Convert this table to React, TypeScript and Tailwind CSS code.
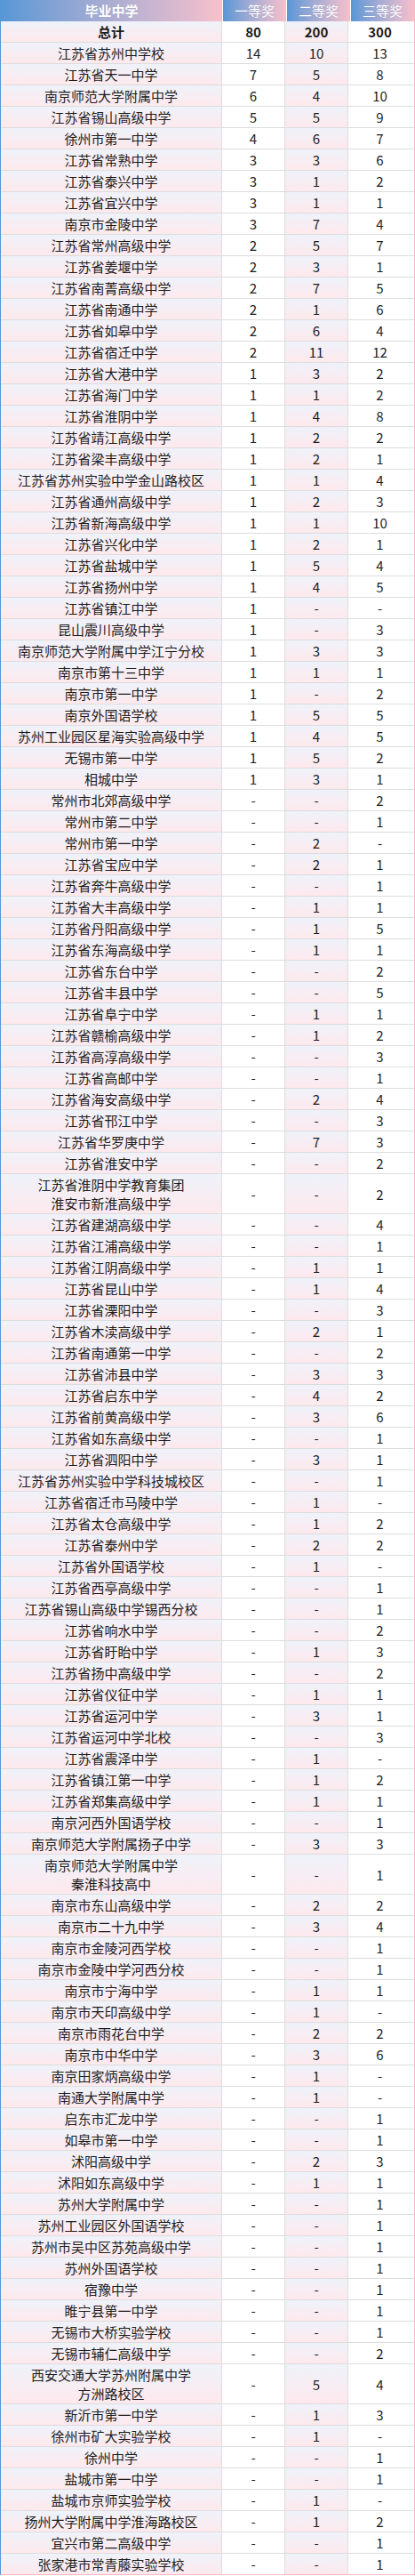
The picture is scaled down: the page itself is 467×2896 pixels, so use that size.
type Row = [string, string, string, string];

// 名称中的 "\n" 表示单元格内换行
const rows: Row[] = [
  ['江苏省苏州中学校', '14', '10', '13'],
  ['江苏省天一中学', '7', '5', '8'],
  ['南京师范大学附属中学', '6', '4', '10'],
  ['江苏省锡山高级中学', '5', '5', '9'],
  ['徐州市第一中学', '4', '6', '7'],
  ['江苏省常熟中学', '3', '3', '6'],
  ['江苏省泰兴中学', '3', '1', '2'],
  ['江苏省宜兴中学', '3', '1', '1'],
  ['南京市金陵中学', '3', '7', '4'],
  ['江苏省常州高级中学', '2', '5', '7'],
  ['江苏省姜堰中学', '2', '3', '1'],
  ['江苏省南菁高级中学', '2', '7', '5'],
  ['江苏省南通中学', '2', '1', '6'],
  ['江苏省如皋中学', '2', '6', '4'],
  ['江苏省宿迁中学', '2', '11', '12'],
  ['江苏省大港中学', '1', '3', '2'],
  ['江苏省海门中学', '1', '1', '2'],
  ['江苏省淮阴中学', '1', '4', '8'],
  ['江苏省靖江高级中学', '1', '2', '2'],
  ['江苏省梁丰高级中学', '1', '2', '1'],
  ['江苏省苏州实验中学金山路校区', '1', '1', '4'],
  ['江苏省通州高级中学', '1', '2', '3'],
  ['江苏省新海高级中学', '1', '1', '10'],
  ['江苏省兴化中学', '1', '2', '1'],
  ['江苏省盐城中学', '1', '5', '4'],
  ['江苏省扬州中学', '1', '4', '5'],
  ['江苏省镇江中学', '1', '-', '-'],
  ['昆山震川高级中学', '1', '-', '3'],
  ['南京师范大学附属中学江宁分校', '1', '3', '3'],
  ['南京市第十三中学', '1', '1', '1'],
  ['南京市第一中学', '1', '-', '2'],
  ['南京外国语学校', '1', '5', '5'],
  ['苏州工业园区星海实验高级中学', '1', '4', '5'],
  ['无锡市第一中学', '1', '5', '2'],
  ['相城中学', '1', '3', '1'],
  ['常州市北郊高级中学', '-', '-', '2'],
  ['常州市第二中学', '-', '-', '1'],
  ['常州市第一中学', '-', '2', '-'],
  ['江苏省宝应中学', '-', '2', '1'],
  ['江苏省奔牛高级中学', '-', '-', '1'],
  ['江苏省大丰高级中学', '-', '1', '1'],
  ['江苏省丹阳高级中学', '-', '1', '5'],
  ['江苏省东海高级中学', '-', '1', '1'],
  ['江苏省东台中学', '-', '-', '2'],
  ['江苏省丰县中学', '-', '-', '5'],
  ['江苏省阜宁中学', '-', '1', '1'],
  ['江苏省赣榆高级中学', '-', '1', '2'],
  ['江苏省高淳高级中学', '-', '-', '3'],
  ['江苏省高邮中学', '-', '-', '1'],
  ['江苏省海安高级中学', '-', '2', '4'],
  ['江苏省邗江中学', '-', '-', '3'],
  ['江苏省华罗庚中学', '-', '7', '3'],
  ['江苏省淮安中学', '-', '-', '2'],
  ['江苏省淮阴中学教育集团\n淮安市新淮高级中学', '-', '-', '2'],
  ['江苏省建湖高级中学', '-', '-', '4'],
  ['江苏省江浦高级中学', '-', '-', '1'],
  ['江苏省江阴高级中学', '-', '1', '1'],
  ['江苏省昆山中学', '-', '1', '4'],
  ['江苏省溧阳中学', '-', '-', '3'],
  ['江苏省木渎高级中学', '-', '2', '1'],
  ['江苏省南通第一中学', '-', '-', '2'],
  ['江苏省沛县中学', '-', '3', '3'],
  ['江苏省启东中学', '-', '4', '2'],
  ['江苏省前黄高级中学', '-', '3', '6'],
  ['江苏省如东高级中学', '-', '-', '1'],
  ['江苏省泗阳中学', '-', '3', '1'],
  ['江苏省苏州实验中学科技城校区', '-', '-', '1'],
  ['江苏省宿迁市马陵中学', '-', '1', '-'],
  ['江苏省太仓高级中学', '-', '1', '2'],
  ['江苏省泰州中学', '-', '2', '2'],
  ['江苏省外国语学校', '-', '1', '-'],
  ['江苏省西亭高级中学', '-', '-', '1'],
  ['江苏省锡山高级中学锡西分校', '-', '-', '1'],
  ['江苏省响水中学', '-', '-', '2'],
  ['江苏省盱眙中学', '-', '1', '3'],
  ['江苏省扬中高级中学', '-', '-', '2'],
  ['江苏省仪征中学', '-', '1', '1'],
  ['江苏省运河中学', '-', '3', '1'],
  ['江苏省运河中学北校', '-', '-', '3'],
  ['江苏省震泽中学', '-', '1', '-'],
  ['江苏省镇江第一中学', '-', '1', '2'],
  ['江苏省郑集高级中学', '-', '1', '1'],
  ['南京河西外国语学校', '-', '-', '1'],
  ['南京师范大学附属扬子中学', '-', '3', '3'],
  ['南京师范大学附属中学\n秦淮科技高中', '-', '-', '1'],
  ['南京市东山高级中学', '-', '2', '2'],
  ['南京市二十九中学', '-', '3', '4'],
  ['南京市金陵河西学校', '-', '-', '1'],
  ['南京市金陵中学河西分校', '-', '-', '1'],
  ['南京市宁海中学', '-', '1', '1'],
  ['南京市天印高级中学', '-', '1', '-'],
  ['南京市雨花台中学', '-', '2', '2'],
  ['南京市中华中学', '-', '3', '6'],
  ['南京田家炳高级中学', '-', '1', '-'],
  ['南通大学附属中学', '-', '1', '-'],
  ['启东市汇龙中学', '-', '-', '1'],
  ['如皋市第一中学', '-', '-', '1'],
  ['沭阳高级中学', '-', '2', '3'],
  ['沭阳如东高级中学', '-', '1', '1'],
  ['苏州大学附属中学', '-', '-', '1'],
  ['苏州工业园区外国语学校', '-', '-', '1'],
  ['苏州市吴中区苏苑高级中学', '-', '-', '1'],
  ['苏州外国语学校', '-', '-', '1'],
  ['宿豫中学', '-', '-', '1'],
  ['睢宁县第一中学', '-', '-', '1'],
  ['无锡市大桥实验学校', '-', '-', '1'],
  ['无锡市辅仁高级中学', '-', '-', '2'],
  ['西安交通大学苏州附属中学\n方洲路校区', '-', '5', '4'],
  ['新沂市第一中学', '-', '1', '3'],
  ['徐州市矿大实验学校', '-', '1', '-'],
  ['徐州中学', '-', '-', '1'],
  ['盐城市第一中学', '-', '-', '1'],
  ['盐城市京师实验学校', '-', '1', '-'],
  ['扬州大学附属中学淮海路校区', '-', '1', '2'],
  ['宜兴市第二高级中学', '-', '-', '1'],
  ['张家港市常青藤实验学校', '-', '-', '1'],
];

const tinted = 'bg-gradient-to-b from-[#eff2fa] to-[#fde9ed]';
const cell = 'flex items-center justify-center text-center whitespace-pre-line py-px leading-[21px]';

function HeadCell({ label, className }: { label: string; className: string }) {
  return (
    <div
      className={`flex items-center justify-center h-full bg-gradient-to-r from-[#5797d6] to-[#f8c0cb] text-white text-[15px] [text-shadow:0_0_1px_rgba(0,0,0,0.15)] ${className}`}
    >
      {label}
    </div>
  );
}

function TableRow({ row, bold, last }: { row: Row; bold?: boolean; last?: boolean }) {
  const [name, a, b, c] = row;
  return (
    <div className={`flex ${last ? '' : 'border-b border-[#dddddd]'} ${bold ? 'font-bold' : ''}`}>
      <div className={`${cell} ${tinted} w-[249px] border-r border-[#dddddd]`}>{name}</div>
      <div className={`${cell} w-[71px] bg-white border-r border-[#dddddd]`}>{a}</div>
      <div className={`${cell} ${tinted} w-[71px] border-r border-[#dddddd]`}>{b}</div>
      <div className={`${cell} w-[71px] bg-white`}>{c}</div>
    </div>
  );
}

export default function App() {
  return (
    <div className="w-[467px] bg-white font-['Noto_Sans_CJK_SC','Microsoft_YaHei',sans-serif] text-[15px] text-[#1c1c1c]">
      <div className="border-l border-r border-b border-l-[#5797d6] border-r-[#f4b9c5] border-b-[#f4b9c5]">
        <div className="flex h-[24px]">
          <HeadCell label="毕业中学" className="w-[250px] border-r border-white font-bold" />
          <HeadCell label="一等奖" className="w-[72px] border-r border-white" />
          <HeadCell label="二等奖" className="w-[72px] border-r border-white" />
          <HeadCell label="三等奖" className="w-[71px]" />
        </div>
        <TableRow row={['总计', '80', '200', '300']} bold />
        {rows.map((r, i) => (
          <TableRow key={r[0]} row={r} last={i === rows.length - 1} />
        ))}
      </div>
    </div>
  );
}
